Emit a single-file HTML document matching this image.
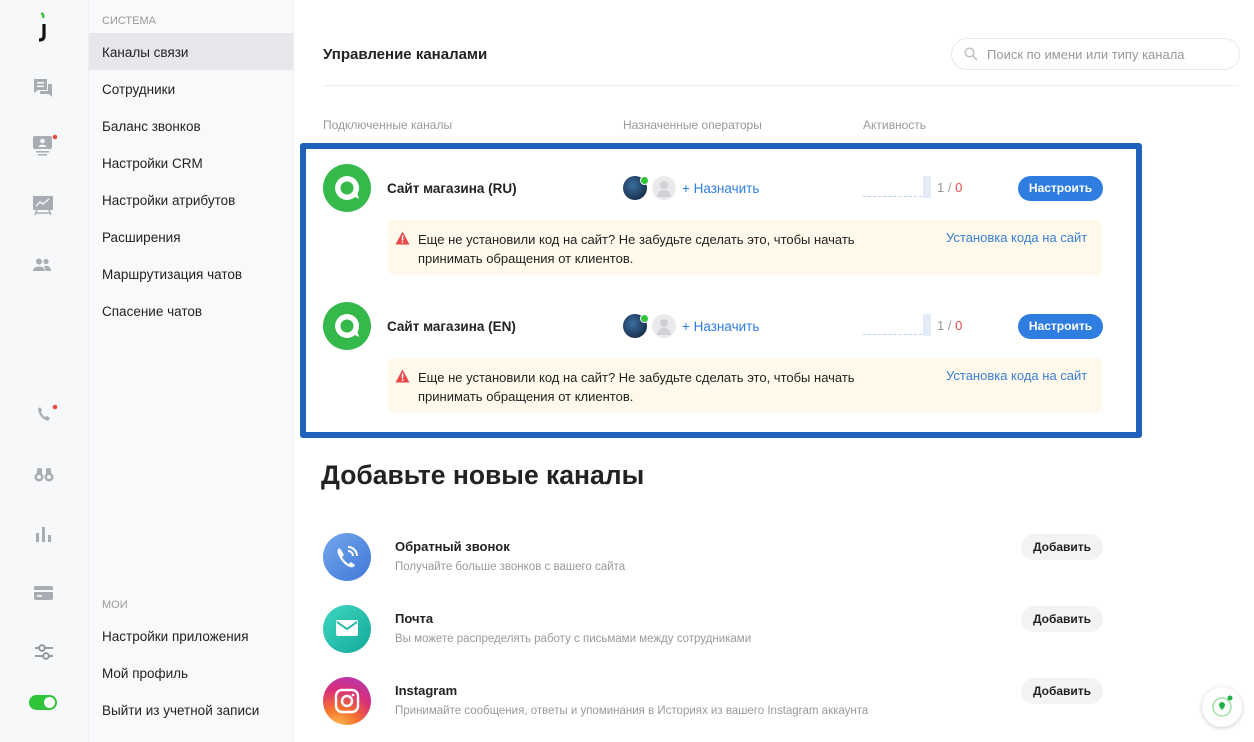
<!DOCTYPE html>
<html><head><meta charset="utf-8"><style>
*{box-sizing:border-box;margin:0;padding:0}
body{width:1254px;height:742px;overflow:hidden;background:#fff;font-family:"Liberation Sans",sans-serif;color:#222;position:relative}
.abs{position:absolute}
.col1{left:0;top:0;width:88px;height:742px;background:#f7f8fa}
.col2{left:88px;top:0;width:206px;height:742px;background:#f8f9fb;border-left:1px solid #eceef1;border-right:1px solid #eceef1}
.nav{position:absolute;left:102px;font-size:13.5px;color:#222;white-space:nowrap}
.sec{position:absolute;left:102px;font-size:11px;color:#999}
.ic{position:absolute;left:33px}
.t{position:absolute;white-space:nowrap}
.btn{position:absolute;background:#2f7de1;color:#fff;font-size:12px;font-weight:bold;border-radius:13px;text-align:center;line-height:25px;width:85px;height:25px;left:1018px}
.warn{position:absolute;left:388px;width:714px;height:55px;background:#fef9ea;border-radius:6px}
.add{position:absolute;left:1021px;width:82px;height:26px;border-radius:13px;background:#f2f3f5;font-size:12px;font-weight:bold;text-align:center;line-height:26px}
.circ{position:absolute;width:48px;height:48px;border-radius:50%;left:323px}
.dash{position:absolute;left:863px;width:59px;height:1px;border-top:1.5px dashed #b8d0ea}
</style></head><body>
<div class="abs col1"></div>
<div class="abs col2"></div>
<svg class="abs" style="left:36px;top:12px" width="14" height="30" viewBox="0 0 14 30"><path d="M5 2 Q8 1 7 6" stroke="#3cc23a" stroke-width="2.5" fill="none"/><path d="M8 12 V24 Q8 28 3 28" stroke="#111" stroke-width="3.2" fill="none"/></svg>
<svg class="ic" style="top:78px" width="20" height="22" viewBox="0 0 20 22"><path d="M1 1h13v11H5l-4 3z" fill="#a9adb3"/><path d="M15 6h4v13l-3-3H7v-3h8z" fill="#a9adb3"/><rect x="4" y="4" width="7" height="1.6" fill="#f7f8fa"/><rect x="4" y="7.5" width="7" height="1.6" fill="#f7f8fa"/></svg>
<svg class="ic" style="top:134px" width="24" height="24" viewBox="0 0 24 24"><rect x="0" y="2" width="19" height="13" rx="2" fill="#a9adb3"/><circle cx="9.5" cy="7" r="2.3" fill="#f7f8fa"/><path d="M5.5 13c0-3 8-3 8 0z" fill="#f7f8fa"/><rect x="3" y="17" width="13" height="1.6" fill="#a9adb3"/><rect x="5" y="20" width="9" height="1.6" fill="#a9adb3"/><circle cx="22" cy="3" r="2.3" fill="#e84a4a"/></svg>
<svg class="ic" style="top:195px" width="20" height="22" viewBox="0 0 20 22"><rect x="0" y="1" width="20" height="14" fill="#a9adb3"/><path d="M3 11l4-4 3 2 6-5" stroke="#f7f8fa" stroke-width="1.4" fill="none"/><path d="M4 15l-2 5M16 15l2 5M3 18h14" stroke="#a9adb3" stroke-width="1.6"/></svg>
<svg class="ic" style="top:258px" width="18" height="14" viewBox="0 0 18 14"><circle cx="6" cy="3.5" r="3" fill="#a9adb3"/><circle cx="13" cy="3.5" r="2.6" fill="#a9adb3"/><path d="M0 13c0-6 12-6 12 0z M11 8c4-1 7 1 7 5h-5z" fill="#a9adb3"/></svg>
<svg class="ic" style="top:404px;left:34px" width="24" height="22" viewBox="0 0 24 22"><path d="M4 5c1 6 4 10 10 12l2-3-3-2-2 1c-2-1-3-3-4-5l1-2-2-3z" fill="#a9adb3"/><circle cx="21" cy="3" r="2.3" fill="#e84a4a"/></svg>
<svg class="ic" style="top:466px;left:34px" width="20" height="16" viewBox="0 0 20 16"><circle cx="5" cy="11" r="4.5" fill="#a9adb3"/><circle cx="15" cy="11" r="4.5" fill="#a9adb3"/><rect x="3" y="2" width="5" height="7" rx="2" fill="#a9adb3"/><rect x="12" y="2" width="5" height="7" rx="2" fill="#a9adb3"/><circle cx="5" cy="11" r="2" fill="#f7f8fa"/><circle cx="15" cy="11" r="2" fill="#f7f8fa"/></svg>
<svg class="ic" style="top:527px;left:35px" width="18" height="16" viewBox="0 0 18 16"><rect x="1" y="6" width="3" height="9" fill="#a9adb3"/><rect x="7" y="0" width="3" height="15" fill="#a9adb3"/><rect x="13" y="8" width="3" height="7" fill="#a9adb3"/></svg>
<svg class="ic" style="top:585px;left:34px" width="20" height="16" viewBox="0 0 20 16"><rect x="0" y="1" width="19" height="14" rx="2" fill="#a9adb3"/><rect x="0" y="5" width="19" height="2" fill="#f7f8fa"/><rect x="3" y="10" width="5" height="1.6" fill="#f7f8fa"/></svg>
<svg class="ic" style="top:643px;left:34px" width="20" height="18" viewBox="0 0 20 18"><path d="M1 5h18M1 13h18" stroke="#8e9298" stroke-width="1.8"/><circle cx="8" cy="5" r="2.8" fill="#f7f8fa" stroke="#8e9298" stroke-width="1.8"/><circle cx="12" cy="13" r="2.8" fill="#f7f8fa" stroke="#8e9298" stroke-width="1.8"/></svg>
<div class="abs" style="left:29px;top:695px;width:28px;height:15px;border-radius:8px;background:#2fc43a"><div style="position:absolute;right:2px;top:2px;width:11px;height:11px;border-radius:50%;background:#fff"></div></div>
<div class="sec" style="top:15px">СИСТЕМА</div>
<div class="abs" style="left:89px;top:33px;width:204px;height:37px;background:#e6e7ea"></div>
<div class="nav" style="top:45px">Каналы связи</div>
<div class="nav" style="top:82px">Сотрудники</div>
<div class="nav" style="top:119px">Баланс звонков</div>
<div class="nav" style="top:156px">Настройки CRM</div>
<div class="nav" style="top:193px">Настройки атрибутов</div>
<div class="nav" style="top:230px">Расширения</div>
<div class="nav" style="top:267px">Маршрутизация чатов</div>
<div class="nav" style="top:304px">Спасение чатов</div>
<div class="sec" style="top:599px">МОИ</div>
<div class="nav" style="top:629px">Настройки приложения</div>
<div class="nav" style="top:666px">Мой профиль</div>
<div class="nav" style="top:703px">Выйти из учетной записи</div>
<div class="t" style="left:323px;top:46px;font-size:15px;font-weight:bold">Управление каналами</div>
<div class="abs" style="left:951px;top:38px;width:289px;height:32px;border:1px solid #e8e9ec;border-radius:16px"></div>
<svg class="abs" style="left:964px;top:47px" width="14" height="14" viewBox="0 0 14 14"><circle cx="5.5" cy="5.5" r="4.3" fill="none" stroke="#bbb" stroke-width="1.4"/><path d="M9 9l4 4" stroke="#bbb" stroke-width="1.5"/></svg>
<div class="t" style="left:987px;top:47px;font-size:13px;color:#999">Поиск по имени или типу канала</div>
<div class="abs" style="left:323px;top:85px;width:916px;height:1px;background:#eceef1"></div>
<div class="t" style="left:323px;top:118px;font-size:12px;color:#999">Подключенные каналы</div>
<div class="t" style="left:623px;top:118px;font-size:12px;color:#999">Назначенные операторы</div>
<div class="t" style="left:863px;top:118px;font-size:12px;color:#999">Активность</div>
<div class="abs" style="left:300px;top:143px;width:842px;height:295px;border:6px solid #1f62bd;border-radius:3px"></div>
<div class="abs" style="left:0;top:0;width:1254px;height:300px">
<svg class="abs" style="left:323px;top:164px" width="48" height="48" viewBox="0 0 48 48"><circle cx="24" cy="24" r="24" fill="#34b94a"/><path d="M24 12a12 12 0 1 0 8 21l4 2-1.5-5A12 12 0 0 0 24 12z" fill="#fff"/><circle cx="24" cy="24" r="6.5" fill="#34b94a"/></svg>
<div class="t" style="left:387px;top:181px;font-size:13.5px;font-weight:bold">Сайт магазина (RU)</div>
<div class="abs" style="left:623px;top:176px;width:24px;height:24px;border-radius:50%;background:radial-gradient(circle at 40% 40%,#3a6ea0,#0e1a2e)"></div>
<div class="abs" style="left:640px;top:176px;width:9px;height:9px;border-radius:50%;background:#2fc43a;border:1px solid #fff"></div>
<div class="abs" style="left:652px;top:176px;width:24px;height:24px;border-radius:50%;background:#e9eaec"><div style="position:absolute;left:8px;top:5px;width:8px;height:8px;border-radius:50%;background:#cfd1d4"></div><div style="position:absolute;left:5px;top:14px;width:14px;height:7px;border-radius:7px 7px 0 0;background:#cfd1d4"></div></div>
<div class="t" style="left:682px;top:181px;font-size:13.5px;color:#2f7de1">+ Назначить</div>
<div class="dash" style="top:196px"></div>
<div class="abs" style="left:923px;top:176px;width:8px;height:22px;background:#e3ebf8"></div>
<div class="t" style="left:937px;top:180px;font-size:13px;color:#999">1 / <span style="color:#e84a4a">0</span></div>
<div class="btn" style="top:176px">Настроить</div>
<div class="warn" style="top:220px"></div>
<svg class="abs" style="left:395px;top:231px" width="15" height="14" viewBox="0 0 15 14"><path d="M7.5 0.5L14.5 13.5H0.5z" fill="#e84a4a"/><rect x="6.8" y="4.5" width="1.5" height="5" fill="#fff"/><rect x="6.8" y="10.5" width="1.5" height="1.5" fill="#fff"/></svg>
<div class="t" style="left:418px;top:230px;font-size:13px;line-height:19px">Еще не установили код на сайт? Не забудьте сделать это, чтобы начать<br>принимать обращения от клиентов.</div>
<div class="t" style="left:946px;top:230px;font-size:13px;color:#3a7fd5">Установка кода на сайт</div>
</div>
<div class="abs" style="left:0;top:138px;width:1254px;height:300px">
<svg class="abs" style="left:323px;top:164px" width="48" height="48" viewBox="0 0 48 48"><circle cx="24" cy="24" r="24" fill="#34b94a"/><path d="M24 12a12 12 0 1 0 8 21l4 2-1.5-5A12 12 0 0 0 24 12z" fill="#fff"/><circle cx="24" cy="24" r="6.5" fill="#34b94a"/></svg>
<div class="t" style="left:387px;top:181px;font-size:13.5px;font-weight:bold">Сайт магазина (EN)</div>
<div class="abs" style="left:623px;top:176px;width:24px;height:24px;border-radius:50%;background:radial-gradient(circle at 40% 40%,#3a6ea0,#0e1a2e)"></div>
<div class="abs" style="left:640px;top:176px;width:9px;height:9px;border-radius:50%;background:#2fc43a;border:1px solid #fff"></div>
<div class="abs" style="left:652px;top:176px;width:24px;height:24px;border-radius:50%;background:#e9eaec"><div style="position:absolute;left:8px;top:5px;width:8px;height:8px;border-radius:50%;background:#cfd1d4"></div><div style="position:absolute;left:5px;top:14px;width:14px;height:7px;border-radius:7px 7px 0 0;background:#cfd1d4"></div></div>
<div class="t" style="left:682px;top:181px;font-size:13.5px;color:#2f7de1">+ Назначить</div>
<div class="dash" style="top:196px"></div>
<div class="abs" style="left:923px;top:176px;width:8px;height:22px;background:#e3ebf8"></div>
<div class="t" style="left:937px;top:180px;font-size:13px;color:#999">1 / <span style="color:#e84a4a">0</span></div>
<div class="btn" style="top:176px">Настроить</div>
<div class="warn" style="top:220px"></div>
<svg class="abs" style="left:395px;top:231px" width="15" height="14" viewBox="0 0 15 14"><path d="M7.5 0.5L14.5 13.5H0.5z" fill="#e84a4a"/><rect x="6.8" y="4.5" width="1.5" height="5" fill="#fff"/><rect x="6.8" y="10.5" width="1.5" height="1.5" fill="#fff"/></svg>
<div class="t" style="left:418px;top:230px;font-size:13px;line-height:19px">Еще не установили код на сайт? Не забудьте сделать это, чтобы начать<br>принимать обращения от клиентов.</div>
<div class="t" style="left:946px;top:230px;font-size:13px;color:#3a7fd5">Установка кода на сайт</div>
</div>
<div class="t" style="left:321px;top:460px;font-size:26.5px;font-weight:bold;color:#222">Добавьте новые каналы</div>
<div class="circ" style="top:533px;background:linear-gradient(135deg,#74a7ec,#3f78d8)"></div>
<svg class="abs" style="left:333px;top:543px" width="28" height="28" viewBox="0 0 28 28"><path d="M6 5c-2 2-2 5 1 10s7 8 10 9c2 1 4 0 5-2l-4-3-2 2c-3-1-6-5-7-7l2-2-3-5z" fill="#fff"/><path d="M15 8a5 5 0 0 1 5 5M15 4a9 9 0 0 1 9 9" stroke="#fff" stroke-width="2" fill="none"/></svg>
<div class="t" style="left:395px;top:539px;font-size:13px;font-weight:bold">Обратный звонок</div>
<div class="t" style="left:395px;top:561px;font-size:11.5px;color:#999">Получайте больше звонков с вашего сайта</div>
<div class="add" style="top:534px">Добавить</div>
<div class="circ" style="top:605px;background:linear-gradient(135deg,#3fd6c0,#12a99a)"></div>
<svg class="abs" style="left:336px;top:619px" width="22" height="18" viewBox="0 0 22 18"><rect x="0" y="1" width="22" height="16" rx="2" fill="#fff"/><path d="M1 3l10 7 10-7" stroke="#1db5a4" stroke-width="1.8" fill="none"/></svg>
<div class="t" style="left:395px;top:611px;font-size:13px;font-weight:bold">Почта</div>
<div class="t" style="left:395px;top:633px;font-size:11.5px;color:#999">Вы можете распределять работу с письмами между сотрудниками</div>
<div class="add" style="top:606px">Добавить</div>
<div class="circ" style="top:677px;background:radial-gradient(circle at 30% 110%,#fdc85a 0%,#f5702d 35%,#d72e7a 65%,#a93cc4 100%)"></div>
<svg class="abs" style="left:334px;top:688px" width="26" height="26" viewBox="0 0 26 26"><rect x="2" y="2" width="22" height="22" rx="6" fill="none" stroke="#fff" stroke-width="2.4"/><circle cx="13" cy="13" r="5" fill="none" stroke="#fff" stroke-width="2.4"/><circle cx="19" cy="7" r="1.4" fill="#fff"/></svg>
<div class="t" style="left:395px;top:683px;font-size:13px;font-weight:bold">Instagram</div>
<div class="t" style="left:395px;top:705px;font-size:11.5px;color:#999">Принимайте сообщения, ответы и упоминания в Историях из вашего Instagram аккаунта</div>
<div class="add" style="top:678px">Добавить</div>
<div class="abs" style="left:1202px;top:687px;width:40px;height:40px;border-radius:50%;background:#fff;box-shadow:0 1px 5px rgba(0,0,0,.2)"></div>
<svg class="abs" style="left:1210px;top:693px" width="26" height="26" viewBox="0 0 26 26"><circle cx="12" cy="14" r="9" fill="none" stroke="#9fe0a8" stroke-width="1.5"/><path d="M12 9a3 3 0 0 1 3 3c0 2-3 5-3 5s-3-3-3-5a3 3 0 0 1 3-3z" fill="#22b24a"/><circle cx="20" cy="5" r="2.5" fill="#22b24a"/></svg>
</body></html>
